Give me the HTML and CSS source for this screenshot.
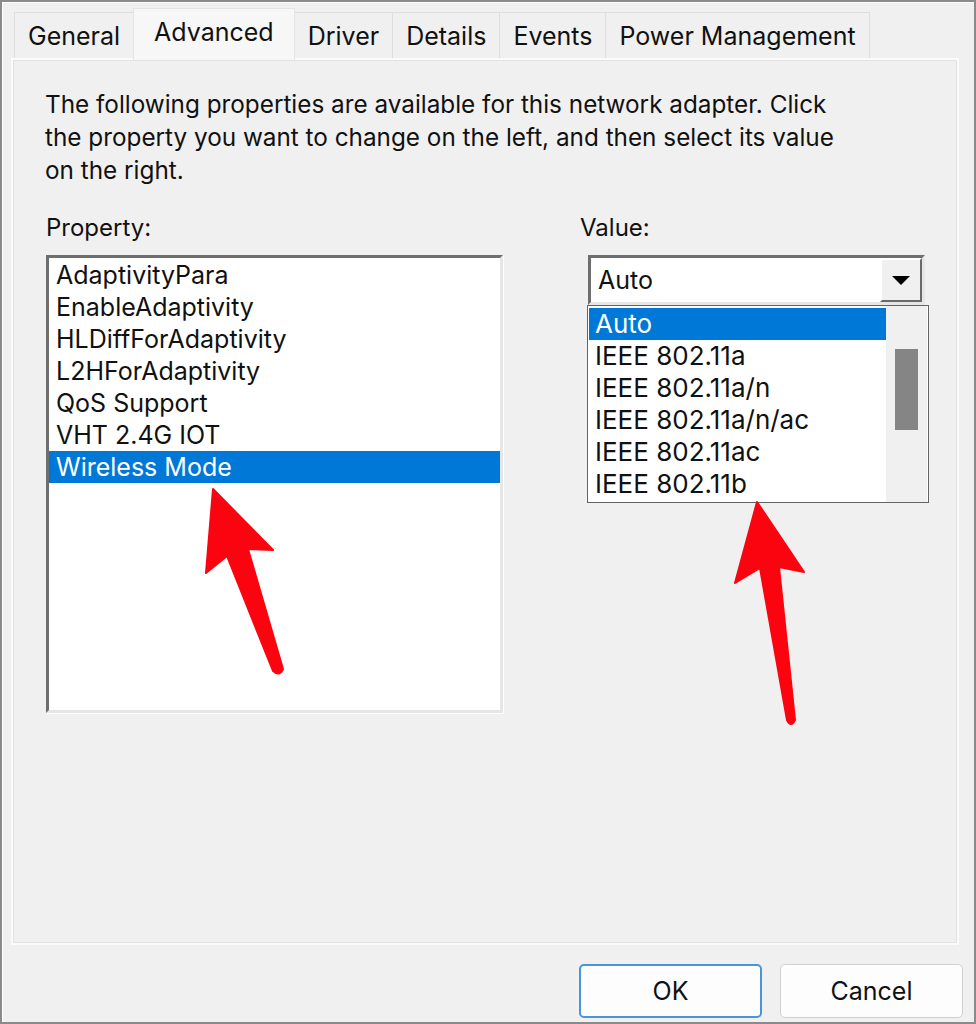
FILE: index.html
```html
<!DOCTYPE html>
<html lang="en">
<head>
    <meta charset="UTF-8">
    <title>Wireless Adapter Properties</title>
    <link rel="stylesheet" href="styles.css">
</head>
<body>
    <div class="window">
        <div class="tabs">
            <div class="tab">General</div>
            <div class="tab active">Advanced</div>
            <div class="tab">Driver</div>
            <div class="tab">Details</div>
            <div class="tab">Events</div>
            <div class="tab">Power Management</div>
        </div>
        <div class="panel">
            <p class="intro">The following properties are available for this network adapter. Click the property you want to change on the left, and then select its value on the right.</p>
            <div class="columns">
                <div class="col-property">
                    <div class="label">Property:</div>
                    <ul class="listbox">
                        <li>AdaptivityPara</li>
                        <li>EnableAdaptivity</li>
                        <li>HLDiffForAdaptivity</li>
                        <li>L2HForAdaptivity</li>
                        <li>QoS Support</li>
                        <li>VHT 2.4G IOT</li>
                        <li class="selected">Wireless Mode</li>
                    </ul>
                </div>
                <div class="col-value">
                    <div class="label">Value:</div>
                    <div class="combo">
                        <div class="combo-field">
                            <span class="combo-text">Auto</span>
                            <span class="combo-button"><span class="caret"></span></span>
                        </div>
                        <div class="dropdown">
                            <ul class="dropdown-items">
                                <li class="selected">Auto</li>
                                <li>IEEE 802.11a</li>
                                <li>IEEE 802.11a/n</li>
                                <li>IEEE 802.11a/n/ac</li>
                                <li>IEEE 802.11ac</li>
                                <li>IEEE 802.11b</li>
                            </ul>
                            <div class="scrollbar"><div class="thumb"></div></div>
                        </div>
                    </div>
                </div>
            </div>
        </div>
        <div class="buttons">
            <button class="btn default">OK</button>
            <button class="btn">Cancel</button>
        </div>

        <!-- annotation arrows drawn on top of the dialog -->
        <svg class="marks" width="976" height="1024" viewBox="0 0 976 1024">
            <path d="M213,489 L273,550 L248,549 L283,669 Q280,677 273,671 L227,556 L206,573 Z" fill="#fb0410" stroke="#fb0410" stroke-width="2" stroke-linejoin="round"/>
            <path d="M757,502 L804,572 L779,567 L795,720 Q791,728 787,720 L760,568 L735,583 Z" fill="#fb0410" stroke="#fb0410" stroke-width="2" stroke-linejoin="round"/>
        </svg>
    </div>
</body>
</html>
```

FILE: styles.css
```css
* {
    box-sizing: border-box;
}
body {
    margin: 0;
    font-family: Inter, "Liberation Sans", Arial, sans-serif;
    color: #111;
}
.window {
    position: relative;
    width: 976px;
    height: 1024px;
    background: #f0f0f0;
    border: 2px solid #8a8a8a;
    box-shadow: inset 1px 1px 0 #fff;
    overflow: hidden;
}
.tabs {
    display: flex;
    align-items: flex-end;
    height: 56px;
    padding-left: 12px;
}
.tab {
    height: 46px;
    line-height: 46px;
    padding: 0 13px;
    font-size: 25px;
    background: #f0f0f0;
    border: 1px solid #dedede;
    border-bottom: none;
    margin-right: -1px;
}
.tab.active {
    position: relative;
    z-index: 2;
    height: 52px;
    line-height: 46px;
    margin-bottom: -2px;
    padding: 0 20px;
    background: #f7f7f7;
    border-color: #e4e4e4;
}
.panel {
    position: relative;
    z-index: 1;
    margin-left: 9px;
    width: 948px;
    height: 887px;
    border: 2px solid #fbfbfb;
    box-shadow: inset 0 0 0 1px #e2e2e2;
    padding: 28px 32px 0 32px;
}
.intro {
    margin: 0;
    font-size: 24.3px;
    line-height: 33px;
    width: 812px;
}
.columns {
    display: flex;
    margin-top: 25px;
}
.label {
    font-size: 24px;
    line-height: 32px;
    height: 43px;
}
.col-property {
    width: 457px;
    margin-left: 1px;
}
.col-value {
    margin-left: 77px;
}
.listbox {
    list-style: none;
    margin: 0;
    padding: 1px 0 0 0;
    width: 457px;
    height: 458px;
    background: #fff;
    border: 3px solid;
    border-color: #6e6e6e #e6e6e6 #e6e6e6 #6e6e6e;
    box-shadow: 1px 1px 0 #fff;
}
.listbox li {
    font-size: 25px;
    height: 32px;
    line-height: 32px;
    padding-left: 7px;
    white-space: nowrap;
}
.listbox li.selected,
.dropdown-items li.selected {
    background: #0078d7;
    color: #fff;
}
.combo {
    margin-left: 8px;
    width: 341px;
}
.combo-field {
    display: flex;
    align-items: center;
    width: 337px;
    height: 50px;
    background: #fff;
    border: 3px solid;
    border-color: #6e6e6e #e6e6e6 #e6e6e6 #6e6e6e;
}
.combo-text {
    flex: 1;
    font-size: 25px;
    padding-left: 7px;
}
.combo-button {
    display: flex;
    align-items: center;
    justify-content: center;
    width: 42px;
    height: 44px;
    background: #f0f0f0;
    border: 2px solid;
    border-color: #fff #6a6a6a #6a6a6a #fff;
}
.caret {
    width: 0;
    height: 0;
    border-left: 9px solid transparent;
    border-right: 9px solid transparent;
    border-top: 9px solid #000;
}
.dropdown {
    display: flex;
    margin-left: -1px;
    width: 342px;
    height: 198px;
    background: #fff;
    border: 1px solid #646464;
    padding: 2px 1px 0 1px;
}
.dropdown-items {
    list-style: none;
    margin: 0;
    padding: 0;
    width: 297px;
}
.dropdown-items li {
    font-size: 26px;
    height: 32px;
    line-height: 32px;
    padding-left: 6px;
    white-space: nowrap;
}
.scrollbar {
    flex: 1;
    margin-top: -2px;
    background: #f0f0f0;
    padding: 43px 9px 0 9px;
}
.thumb {
    height: 81px;
    background: #858585;
}
.buttons {
    display: flex;
    justify-content: flex-end;
    gap: 18px;
    margin-top: 19px;
    padding-right: 11px;
}
.btn {
    width: 183px;
    height: 54px;
    font-family: inherit;
    font-size: 25px;
    color: #111;
    background: #fdfdfd;
    border: 1px solid #d0d0d0;
    border-radius: 5px;
}
.btn.default {
    border: 2px solid #4a94d8;
}
.marks {
    position: absolute;
    left: -2px;
    top: -2px;
    z-index: 5;
    pointer-events: none;
}
```
